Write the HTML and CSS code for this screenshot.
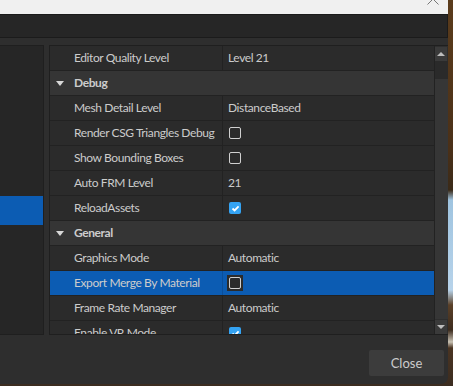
FILE: index.html
```html
<!DOCTYPE html>
<html>
<head>
<meta charset="utf-8">
<link rel="stylesheet" href="styles.css">
</head>
<body>
<div class="scene">
  <div class="window">
    <div class="titlebar">
      <svg class="x" width="12" height="5" viewBox="0 0 12 5"><path d="M0.5 4.5 L6 -1 L11.5 4.5" stroke="#777" stroke-width="1" fill="none"/></svg>
    </div>
    <div class="toolbar"></div>
    <div class="content">
      <div class="tree">
        <div class="tree-sel"></div>
      </div>
      <div class="grid">
        <div class="rows">
          <div class="row"><div class="name">Editor Quality Level</div><div class="val">Level 21</div></div>
          <div class="row group"><span class="tri"></span><span class="gname">Debug</span></div>
          <div class="row"><div class="name">Mesh Detail Level</div><div class="val">DistanceBased</div></div>
          <div class="row"><div class="name">Render CSG Triangles Debug</div><div class="val"><span class="cb"></span></div></div>
          <div class="row"><div class="name">Show Bounding Boxes</div><div class="val"><span class="cb"></span></div></div>
          <div class="row"><div class="name">Auto FRM Level</div><div class="val">21</div></div>
          <div class="row"><div class="name">ReloadAssets</div><div class="val"><span class="cb on"><svg width="11" height="11" viewBox="0 0 11 11"><path d="M2.5 5.5 L4.6 7.5 L8.6 3.4" stroke="#fff" stroke-width="1.8" fill="none"/></svg></span></div></div>
          <div class="row group"><span class="tri"></span><span class="gname">General</span></div>
          <div class="row"><div class="name">Graphics Mode</div><div class="val">Automatic</div></div>
          <div class="row sel"><div class="name">Export Merge By Material</div><div class="val"><span class="cbwrap"><span class="cb"></span></span></div></div>
          <div class="row"><div class="name">Frame Rate Manager</div><div class="val">Automatic</div></div>
          <div class="row"><div class="name">Enable VR Mode</div><div class="val"><span class="cb on"><svg width="11" height="11" viewBox="0 0 11 11"><path d="M2.5 5.5 L4.6 7.5 L8.6 3.4" stroke="#fff" stroke-width="1.8" fill="none"/></svg></span></div></div>
        </div>
        <div class="scrollbar">
          <div class="sb-btn"><span class="up"></span></div>
          <div class="sb-track"></div>
          <div class="sb-thumb"></div>
          <div class="sb-btn"><span class="down"></span></div>
        </div>
      </div>
    </div>
    <div class="footer">
      <button class="close">Close</button>
    </div>
  </div>
</div>
</body>
</html>
```
FILE: styles.css
```css
* { box-sizing: border-box; }
html, body { margin: 0; padding: 0; }
body {
  width: 453px;
  height: 386px;
  overflow: hidden;
  font-family: "Lato", "Open Sans", sans-serif;
}
.scene {
  width: 453px;
  height: 386px;
  background: linear-gradient(to bottom, #5b3c1c 0px, #4a3018 150px, #3a2a18 190px, #9fc4e0 200px, #b7d3ea 290px, #5a4028 305px, #3d2c1e 330px, #c9c2b4 342px, #4a3422 348px, #3b2c20 386px);
}
.window {
  width: 448px;
  height: 384px;
  background: #2e2e2e;
  border-bottom-right-radius: 7px;
  overflow: hidden;
  display: flex;
  flex-direction: column;
}
.titlebar {
  height: 14px;
  background: #f0f0f0;
  position: relative;
  flex: none;
}
.titlebar .x {
  position: absolute;
  left: 427px;
  top: 0;
}
.toolbar {
  height: 24px;
  flex: none;
  background: #262626;
  border-top: 1px solid #1a1a1a;
  border-bottom: 1px solid #1b1b1b;
  border-right: 1px solid #1b1b1b;
}
.content {
  flex: none;
  height: 290px;
  margin-top: 7px;
  display: flex;
  gap: 5px;
}
.tree {
  width: 44px;
  background: #262626;
  border-top: 1px solid #1f1f1f;
  border-right: 1px solid #1f1f1f;
  border-bottom: 1px solid #1f1f1f;
  padding-top: 150px;
}
.tree-sel {
  height: 29px;
  background: #0c5cb3;
}
.grid {
  flex: 1;
  display: flex;
  border: 1px solid #1f1f1f;
  border-right: none;
  overflow: hidden;
  background: #2b2b2b;
}
.rows {
  width: 384px;
  flex: none;
  overflow: hidden;
}
.row {
  height: 25px;
  display: flex;
  border-bottom: 1px solid #222222;
  color: #cccccc;
  font-size: 12px;
  letter-spacing: -0.4px;
  background: #2b2b2b;
}
.row .name {
  width: 173px;
  flex: none;
  padding-left: 24px;
  border-right: 1px solid #222222;
  line-height: 24px;
  white-space: nowrap;
  overflow: hidden;
}
.row .val {
  flex: 1;
  padding-left: 5px;
  line-height: 24px;
  display: flex;
  align-items: center;
}
.row.group {
  background: #353535;
  align-items: center;
}
.row.group .tri {
  width: 0;
  height: 0;
  margin-left: 6px;
  border-left: 4px solid transparent;
  border-right: 4px solid transparent;
  border-top: 5px solid #d8d8d8;
}
.row.group .gname {
  margin-left: 10px;
  font-weight: bold;
  line-height: 24px;
}
.row.sel {
  background: #0c5cb3;
}
.row.sel .name { border-right-color: #0a4f9b; }
.cb {
  display: inline-flex;
  width: 12px;
  height: 12px;
  border: 1.5px solid #d0d0d0;
  border-radius: 2px;
  margin-left: 1px;
}
.cb.on {
  background: #34a3f3;
  border: none;
}
.cb svg { display: block; margin: 0.5px; }
.cbwrap {
  display: inline-flex;
  padding: 2px;
  background: #2b2b2b;
  margin-left: -1px;
}
.cbwrap .cb { margin-left: 0; }
.scrollbar {
  width: 15px;
  flex: none;
  display: flex;
  flex-direction: column;
  background: #2e2e2e;
  border-left: 1px solid #222222;
  border-right: 1px solid #1b1b1b;
}
.sb-btn {
  height: 14px;
  background: #3a3a3a;
  margin: 1px 1px 0 0;
  display: flex;
  align-items: center;
  justify-content: center;
  flex: none;
}
.sb-track {
  height: 18px;
  background: #2a2a2a;
  flex: none;
}
.sb-thumb {
  flex: 1;
  background: #363636;
}
.up, .down {
  width: 0; height: 0;
  border-left: 4px solid transparent;
  border-right: 4px solid transparent;
}
.up { border-bottom: 4px solid #bdbdbd; }
.down { border-top: 4px solid #bdbdbd; }
.footer {
  flex: 1;
  display: flex;
  justify-content: flex-end;
  align-items: flex-start;
  padding: 15px 4px 0 0;
}
.close {
  width: 75px;
  height: 26px;
  background: #3c3c3c;
  border: none;
  border-radius: 2px;
  color: #cccccc;
  font-family: "Lato", "Open Sans", sans-serif;
  font-size: 13px;
}
```
